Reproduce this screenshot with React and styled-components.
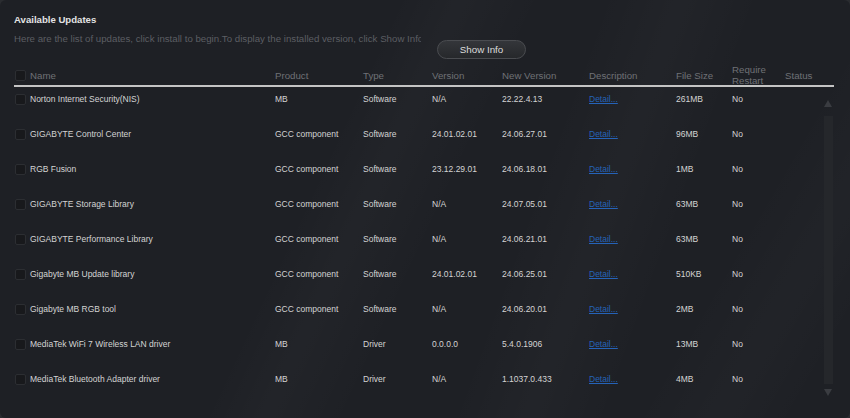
import React from 'react';
import styled, { createGlobalStyle } from 'styled-components';

const GlobalStyle = createGlobalStyle`
  html, body {
    margin: 0;
    padding: 0;
    background: #2a2c30;
  }
  body {
    font-family: "Liberation Sans", Arial, sans-serif;
  }
`

const Window = styled.div`
  width: 850px;
  height: 418px;
  box-sizing: border-box;
  padding: 0 16px 0 14px;
  border-radius: 6px;
  overflow: hidden;
  background:
    linear-gradient(115deg, transparent 38%, rgba(255,255,255,0.018) 44%, transparent 52%),
    linear-gradient(110deg, transparent 60%, rgba(255,255,255,0.02) 68%, transparent 76%),
    linear-gradient(120deg, transparent 80%, rgba(255,255,255,0.015) 88%, transparent 95%),
    #1e2025;
`

const Header = styled.div`
  display: flex;
  align-items: flex-start;
  height: 64px;
`

const Intro = styled.div`
  width: 407px;
  padding-top: 14px;
  overflow: hidden;
  white-space: nowrap;
`

const Title = styled.div`
  font-size: 9.6px;
  line-height: 12px;
  font-weight: bold;
  color: #e4e4e4;
`

const Subtitle = styled.div`
  margin-top: 7px;
  font-size: 9.7px;
  line-height: 12px;
  color: #5c5e63;
`

const Button = styled.button`
  margin: 40px 0 0 16px;
  width: 89px;
  height: 19px;
  padding: 0;
  border-radius: 10px;
  border: 1px solid #4a4c50;
  background: linear-gradient(#34363a, #26282b);
  color: #dcdcdc;
  font-family: inherit;
  font-size: 9.8px;
`

const Table = styled.div`
  width: 820px;
`

const cols = '16px 245px 88px 69px 70px 87px 87px 56px 53px 1fr'

const HeadRow = styled.div`
  display: grid;
  grid-template-columns: ${cols};
  align-items: center;
  height: 21px;
  font-size: 9.7px;
  line-height: 11px;
  color: #6f7176;
  border-bottom: 2px solid #c4c4c4;
`

const Body = styled.div`
  display: flex;
`

const Rows = styled.div`
  flex: 1;
`

const Row = styled.div`
  display: grid;
  grid-template-columns: ${cols};
  align-items: center;
  height: 35px;
  padding-bottom: 11px;
  box-sizing: border-box;
  font-size: 8.5px;
  color: #d4d4d4;
`

const Check = styled.span`
  display: block;
  width: 11px;
  height: 11px;
  margin-left: 1px;
  border: 1px solid #2c2e32;
  border-radius: 2px;
  background: #18191c;
  box-sizing: border-box;
`

const Cell = styled.span`
  white-space: nowrap;
`

const Detail = styled.a`
  color: #2563b8;
  text-decoration: underline;
  white-space: nowrap;
`

const Scroll = styled.div`
  width: 12px;
  display: flex;
  flex-direction: column;
  align-items: center;
  padding-top: 13px;
`

const Arrow = styled.div`
  width: 0;
  height: 0;
  border-left: 4.5px solid transparent;
  border-right: 4.5px solid transparent;
  ${p => p.down
    ? 'border-top: 7px solid #3a3c41; margin-top: 5px;'
    : 'border-bottom: 7px solid #3a3c41; margin-bottom: 9px;'}
`

const Track = styled.div`
  width: 9px;
  height: 268px;
  background: #25272b;
`

const updates = [
  ['Norton Internet Security(NIS)', 'MB', 'Software', 'N/A', '22.22.4.13', '261MB'],
  ['GIGABYTE Control Center', 'GCC component', 'Software', '24.01.02.01', '24.06.27.01', '96MB'],
  ['RGB Fusion', 'GCC component', 'Software', '23.12.29.01', '24.06.18.01', '1MB'],
  ['GIGABYTE Storage Library', 'GCC component', 'Software', 'N/A', '24.07.05.01', '63MB'],
  ['GIGABYTE Performance Library', 'GCC component', 'Software', 'N/A', '24.06.21.01', '63MB'],
  ['Gigabyte MB Update library', 'GCC component', 'Software', '24.01.02.01', '24.06.25.01', '510KB'],
  ['Gigabyte MB RGB tool', 'GCC component', 'Software', 'N/A', '24.06.20.01', '2MB'],
  ['MediaTek WiFi 7 Wireless LAN driver', 'MB', 'Driver', '0.0.0.0', '5.4.0.1906', '13MB'],
  ['MediaTek Bluetooth Adapter driver', 'MB', 'Driver', 'N/A', '1.1037.0.433', '4MB'],
]

export default function App() {
  return (
    <>
      <GlobalStyle />
      <Window>
        <Header>
          <Intro>
            <Title>Available Updates</Title>
            <Subtitle>
              Here are the list of updates, click install to begin.To display the installed version, click Show Info
            </Subtitle>
          </Intro>
          <Button>Show Info</Button>
        </Header>
        <Table>
          <HeadRow>
            <Check />
            <Cell>Name</Cell>
            <Cell>Product</Cell>
            <Cell>Type</Cell>
            <Cell>Version</Cell>
            <Cell>New Version</Cell>
            <Cell>Description</Cell>
            <Cell>File Size</Cell>
            <span>Require<br />Restart</span>
            <Cell>Status</Cell>
          </HeadRow>
          <Body>
            <Rows>
              {updates.map(([name, product, type, version, newVersion, size]) => (
                <Row key={name}>
                  <Check />
                  <Cell>{name}</Cell>
                  <Cell>{product}</Cell>
                  <Cell>{type}</Cell>
                  <Cell>{version}</Cell>
                  <Cell>{newVersion}</Cell>
                  <Detail>Detail...</Detail>
                  <Cell>{size}</Cell>
                  <Cell>No</Cell>
                  <Cell />
                </Row>
              ))}
            </Rows>
            <Scroll>
              <Arrow />
              <Track />
              <Arrow down />
            </Scroll>
          </Body>
        </Table>
      </Window>
    </>
  )
}
